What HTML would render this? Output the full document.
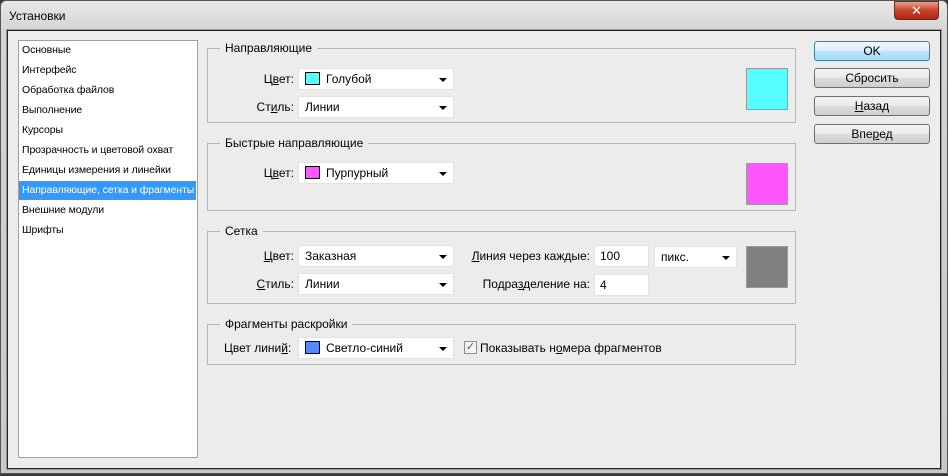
<!DOCTYPE html>
<html><head><meta charset="utf-8"><style>
*{margin:0;padding:0;box-sizing:border-box}
body{width:948px;height:476px;background:#3a3630;position:relative;overflow:hidden;font-family:"Liberation Sans","DejaVu Sans",sans-serif;font-size:12px;color:#000}
.frame{position:absolute;left:0;top:0;width:948px;height:474px;background:linear-gradient(#e8e8e8,#d4d4d4 30px,#c8c8c8);border-radius:6px 6px 0 0;border:1px solid #555}
.title{position:absolute;left:8px;top:8px;font-size:12px}
.close{position:absolute;left:893px;top:0;width:45px;height:19px;border-radius:0 0 4px 4px;background:linear-gradient(#e8a090,#c8402a 50%,#b02810);border:1px solid #6b2a20;color:#fff;font-weight:bold;text-align:center;font-size:13px;line-height:17px}
.content{position:absolute;left:7px;top:30px;width:934px;height:439px;background:#ececec;border:1px solid #222;outline:1px solid #999}
.a{position:absolute}
.list{left:18px;top:40px;width:180px;height:418px;background:#fff;border:1px solid #a0a0a0;font-size:10.5px;letter-spacing:-0.1px}
.list div{position:absolute;left:3px;height:19px;line-height:19px;width:176px;white-space:nowrap}
.sel{background:#3399ff;color:#fff;left:0!important;padding-left:3px!important;width:177px!important}
.grp{position:absolute;left:207px;width:589px;border:1px solid #b5b5b5}
.gt{position:absolute;left:12px;top:-9px;background:#ececec;padding:0 5px;font-size:12px;line-height:16px}
.lbl{position:absolute;font-size:12px;line-height:23px;text-align:right;white-space:nowrap}
.dd{position:absolute;background:#fff;border:1px solid #e2e2e2;height:22px;font-size:12px;line-height:20px;padding-left:6px}
.dd:after{content:"";position:absolute;right:6px;top:9px;border-left:4px solid transparent;border-right:4px solid transparent;border-top:4px solid #000}
.nd:after{display:none}
.sw{display:inline-block;width:15px;height:13px;border:1px solid #000;vertical-align:-2px;margin-right:6px}
.big{position:absolute;left:746px;width:42px;height:42px;border:1px solid #999}
.btn{position:absolute;left:814px;width:116px;height:20px;border:1px solid #707070;border-radius:3px;background:linear-gradient(#f2f2f2,#ebebeb 50%,#dddddd 51%,#cfcfcf);text-align:center;line-height:18px;font-size:12px}
.ok{border-color:#3c7fb1;background:linear-gradient(#eaf6fd,#d9f0fc 50%,#bee6fd 51%,#a7d9f5)}
u{text-decoration:underline}
</style></head><body>
<div class="frame"><div class="title">Установки</div><div class="close">✕</div></div>
<div class="content"></div>
<div class="a list">
<div style="top:0">Основные</div>
<div style="top:20px">Интерфейс</div>
<div style="top:40px">Обработка файлов</div>
<div style="top:60px">Выполнение</div>
<div style="top:80px">Курсоры</div>
<div style="top:100px">Прозрачность и цветовой охват</div>
<div style="top:120px">Единицы измерения и линейки</div>
<div class="sel" style="top:140px">Направляющие, сетка и фрагменты</div>
<div style="top:160px">Внешние модули</div>
<div style="top:180px">Шрифты</div>
</div>

<div class="grp" style="top:48px;height:75px"><div class="gt">Направляющие</div></div>
<div class="lbl" style="left:220px;width:74px;top:68px">Ц<u>в</u>ет:</div>
<div class="dd" style="left:298px;top:68px;width:156px"><span class="sw" style="background:#55ffff"></span>Голубой</div>
<div class="lbl" style="left:220px;width:74px;top:96px">Ст<u>и</u>ль:</div>
<div class="dd" style="left:298px;top:96px;width:156px">Линии</div>
<div class="big" style="top:68px;background:#55ffff"></div>

<div class="grp" style="top:143px;height:68px"><div class="gt">Быстрые направляющие</div></div>
<div class="lbl" style="left:220px;width:74px;top:162px">Ц<u>в</u>ет:</div>
<div class="dd" style="left:298px;top:162px;width:156px"><span class="sw" style="background:#ff55ff"></span>Пурпурный</div>
<div class="big" style="top:163px;background:#ff55ff"></div>

<div class="grp" style="top:231px;height:73px"><div class="gt">Сетка</div></div>
<div class="lbl" style="left:220px;width:74px;top:245px"><u>Ц</u>вет:</div>
<div class="dd" style="left:298px;top:245px;width:156px">Заказная</div>
<div class="lbl" style="left:220px;width:74px;top:273px"><u>С</u>тиль:</div>
<div class="dd" style="left:298px;top:273px;width:156px">Линии</div>
<div class="lbl" style="left:460px;width:130px;top:245px"><u>Л</u>иния через каждые:</div>
<div class="dd nd" style="left:594px;top:245px;width:55px;padding-left:5px">100</div>
<div class="dd" style="left:654px;top:246px;width:83px;padding-left:6px">пикс.</div>
<div class="lbl" style="left:460px;width:130px;top:273px">Подра<u>з</u>деление на:</div>
<div class="dd nd" style="left:594px;top:274px;width:55px;padding-left:5px">4</div>
<div class="big" style="top:246px;background:#808080"></div>

<div class="grp" style="top:324px;height:41px"><div class="gt">Фрагменты раскройки</div></div>
<div class="lbl" style="left:224px;top:337px">Цвет лини<u>й</u>:</div>
<div class="dd" style="left:298px;top:337px;width:156px"><span class="sw" style="background:#5588ff"></span>Светло-синий</div>
<div class="a" style="left:464px;top:341px;width:13px;height:13px;border:1px solid #8f8f8f;background:#f4f4f4;font-size:11px;line-height:11px;text-align:center;color:#3a5a9a">✓</div>
<div class="lbl" style="left:480px;top:337px">Показывать н<u>о</u>мера фрагментов</div>

<div class="btn ok" style="top:41px">OK</div>
<div class="btn" style="top:68px">Сбросить</div>
<div class="btn" style="top:96px"><u>Н</u>азад</div>
<div class="btn" style="top:124px">Впе<u>р</u>ед</div>
</body></html>
